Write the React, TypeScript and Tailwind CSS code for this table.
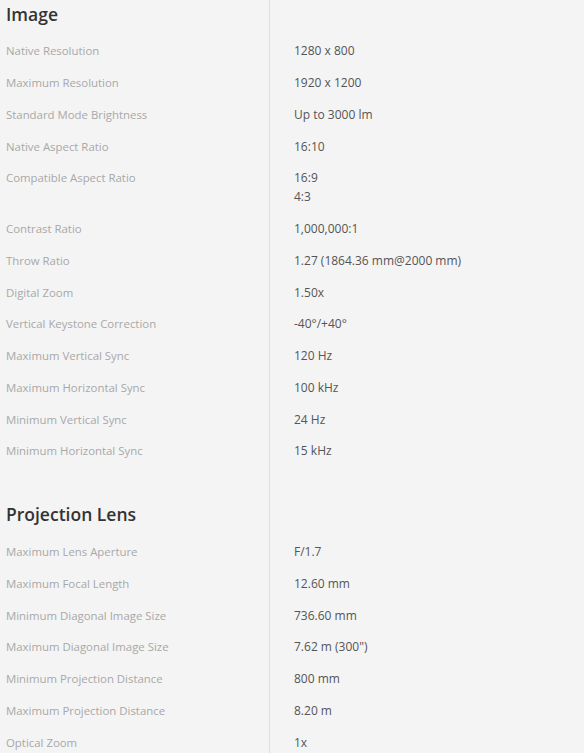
import React from "react";

type Spec = { label: string; value: string[] };

const IMAGE_SPECS: Spec[] = [
    { label: "Native Resolution", value: ["1280 x 800"] },
    { label: "Maximum Resolution", value: ["1920 x 1200"] },
    { label: "Standard Mode Brightness", value: ["Up to 3000 lm"] },
    { label: "Native Aspect Ratio", value: ["16:10"] },
    { label: "Compatible Aspect Ratio", value: ["16:9", "4:3"] },
    { label: "Contrast Ratio", value: ["1,000,000:1"] },
    { label: "Throw Ratio", value: ["1.27 (1864.36 mm@2000 mm)"] },
    { label: "Digital Zoom", value: ["1.50x"] },
    { label: "Vertical Keystone Correction", value: ["-40°/+40°"] },
    { label: "Maximum Vertical Sync", value: ["120 Hz"] },
    { label: "Maximum Horizontal Sync", value: ["100 kHz"] },
    { label: "Minimum Vertical Sync", value: ["24 Hz"] },
    { label: "Minimum Horizontal Sync", value: ["15 kHz"] },
];

const LENS_SPECS: Spec[] = [
    { label: "Maximum Lens Aperture", value: ["F/1.7"] },
    { label: "Maximum Focal Length", value: ["12.60 mm"] },
    { label: "Minimum Diagonal Image Size", value: ["736.60 mm"] },
    { label: "Maximum Diagonal Image Size", value: ["7.62 m (300\")"] },
    { label: "Minimum Projection Distance", value: ["800 mm"] },
    { label: "Maximum Projection Distance", value: ["8.20 m"] },
    { label: "Optical Zoom", value: ["1x"] },
];

function Section({ title, specs, first }: { title: string; specs: Spec[]; first?: boolean }) {
    return (
        <section>
            {/* Heading row */}
            <div className="grid grid-cols-[270px_1fr]">
                <h2
                    className={`border-r border-[#e0e0e0] pl-[6px] ${first ? "pt-[2px] pb-[9px]" : "pt-[35px] pb-[10px]"} text-[17.5px] leading-[24px] font-semibold text-[#333]`}
                >
                    {title}
                </h2>
                <div />
            </div>
            {/* Spec rows */}
            {specs.map((spec) => (
                <div key={spec.label} className="grid grid-cols-[270px_1fr] leading-[19px]">
                    <div className="border-r border-[#e0e0e0] pl-[6px] py-[6.375px] text-[11.4px] text-[#a8a8a8]">
                        {spec.label}
                    </div>
                    <div className="pl-[24px] py-[6.375px] text-[12px] text-[#555]">
                        {spec.value.map((v) => (
                            <div key={v}>{v}</div>
                        ))}
                    </div>
                </div>
            ))}
        </section>
    );
}

export default function App() {
    return (
        <div className="w-full min-h-screen bg-[#f4f4f4] font-['Open_Sans',sans-serif]">
            <Section title="Image" specs={IMAGE_SPECS} first />
            <Section title="Projection Lens" specs={LENS_SPECS} />
        </div>
    );
}
